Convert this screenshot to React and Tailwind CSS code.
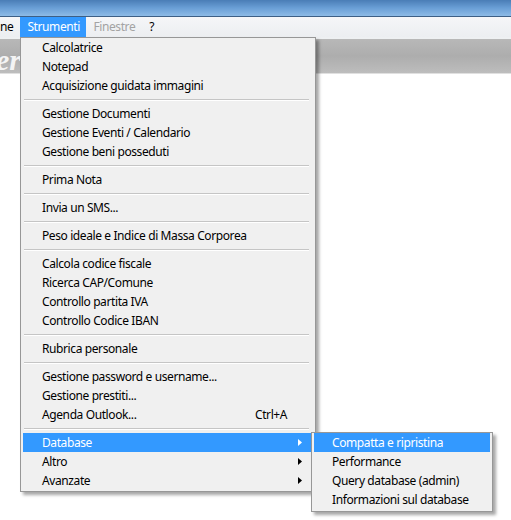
import React from 'react';

const font = { fontFamily: '"Noto Sans", "Open Sans", sans-serif', letterSpacing: '-0.4px' };

const mainItems = [
  ['Calcolatrice'],
  ['Notepad'],
  ['Acquisizione guidata immagini'],
  '-',
  ['Gestione Documenti'],
  ['Gestione Eventi / Calendario'],
  ['Gestione beni posseduti'],
  '-',
  ['Prima Nota'],
  '-',
  ['Invia un SMS...'],
  '-',
  ['Peso ideale e Indice di Massa Corporea'],
  '-',
  ['Calcola codice fiscale'],
  ['Ricerca CAP/Comune'],
  ['Controllo partita IVA'],
  ['Controllo Codice IBAN'],
  '-',
  ['Rubrica personale'],
  '-',
  ['Gestione password e username...'],
  ['Gestione prestiti...'],
  ['Agenda Outlook...', 'Ctrl+A'],
  '-',
  ['Database', null, true, true],
  ['Altro', null, true],
  ['Avanzate', null, true],
];

const subItems = ['Compatta e ripristina', 'Performance', 'Query database (admin)', 'Informazioni sul database'];

function Arrow({ white }) {
  return (
    <svg width="4" height="7" viewBox="0 0 4 7" className="absolute right-[9px] top-[6px]">
      <path d="M0 0 L4 3.5 L0 7 Z" fill={white ? '#ffffff' : '#000000'} />
    </svg>
  );
}

function Separator() {
  return (
    <div className="h-[9px] flex flex-col justify-center">
      <div className="h-px bg-[#c5c5c5] ml-[1px] mr-[2px]" />
      <div className="h-px bg-white ml-[1px] mr-[2px]" />
    </div>
  );
}

export default function App() {
  return (
    <div className="relative w-[511px] h-[520px] bg-white overflow-hidden text-[12px] text-black" style={font}>
      {/* title bar */}
      <div className="h-[16px] bg-gradient-to-b from-[#4a7db6] via-[#6a9fd6] to-[#8dbbe6]" />
      <div className="h-px bg-[#3d5f85]" />
      {/* menu bar */}
      <div className="h-[20px] bg-gradient-to-b from-[#f5f6f8] to-[#eceef1] flex items-center">
        <span className="pr-[7px]">ne</span>
        <span className="h-[20px] w-[66px] bg-[#3399ff] text-white flex items-center pl-[7px]">Strumenti</span>
        <span className="ml-[7px] text-[#a3a3a3]">Finestre</span>
        <span className="ml-[14px]">?</span>
      </div>
      <div className="h-[2px] bg-[#eef0f2]" />
      {/* banner band */}
      <div className="h-[35px] bg-gradient-to-b from-[#b8b8b8] via-[#adadad] to-[#bdbdbd] overflow-hidden relative border-b border-[#e0e0e0]">
        <span className="absolute left-[-4px] top-[-2px] text-[30px] font-bold italic text-[#f4f4f4]" style={{ fontFamily: '"Liberation Serif", serif', letterSpacing: 0 }}>erC</span>
      </div>

      {/* main dropdown */}
      <div className="absolute left-[20px] top-[37px] w-[296px] bg-[#f0f0f0] border border-[#979797] pl-[2px] pr-[4px] pb-[1px] shadow-[3px_3px_3px_rgba(0,0,0,0.35)]">
        {mainItems.map((it, i) =>
          it === '-' ? (
            <Separator key={i} />
          ) : (
            <div
              key={i}
              className={
                'relative h-[19px] flex items-center pl-[19px] ' +
                (it[3] ? 'bg-[#3399ff] text-white' : '')
              }
            >
              <span>{it[0]}</span>
              {it[1] && <span className="absolute left-[232px]">{it[1]}</span>}
              {it[2] && <Arrow white={it[3]} />}
            </div>
          )
        )}
      </div>

      {/* submenu */}
      <div className="absolute left-[311px] top-[432px] w-[182px] bg-[#f0f0f0] border border-[#979797] px-[2px] pb-[2px] shadow-[3px_3px_3px_rgba(0,0,0,0.35)]">
        {subItems.map((t, i) => (
          <div key={i} className={'h-[19px] flex items-center pl-[18px] ' + (i === 0 ? 'bg-[#3399ff] text-white' : '')}>
            {t}
          </div>
        ))}
      </div>
    </div>
  );
}
